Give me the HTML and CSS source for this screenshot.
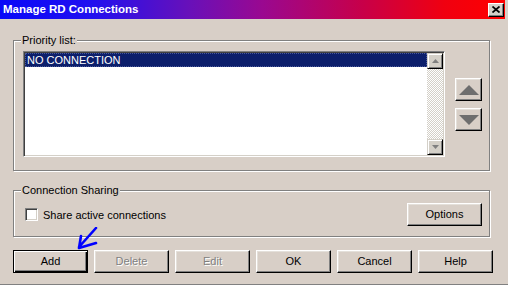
FILE: index.html
```html
<!DOCTYPE html>
<html>
<head>
<meta charset="utf-8">
<link rel="stylesheet" href="styles.css">
</head>
<body>
<div class="window">
  <div class="titlebar">
    <span class="title">Manage RD Connections</span>
    <button class="close" aria-label="Close">
      <svg width="8" height="7" viewBox="0 0 8 7"><path d="M0.5 0.5 L7.5 6.5 M7.5 0.5 L0.5 6.5" stroke="#000" stroke-width="1.7" fill="none"/></svg>
    </button>
  </div>

  <div class="group group-priority">
    <span class="legend">Priority list:</span>
    <div class="listbox">
      <div class="list-items">
        <div class="item selected">NO CONNECTION</div>
      </div>
      <div class="scrollbar">
        <div class="sb-btn">
          <svg width="7" height="4" viewBox="0 0 7 4"><path d="M3.5 0 L7 4 L0 4 Z" fill="#808080"/></svg>
        </div>
        <div class="sb-track"></div>
        <div class="sb-btn">
          <svg width="7" height="4" viewBox="0 0 7 4"><path d="M0 0 L7 0 L3.5 4 Z" fill="#808080"/></svg>
        </div>
      </div>
    </div>
    <div class="order-btns">
      <button class="btn arrow-btn" aria-label="Move up">
        <svg width="20" height="10" viewBox="0 0 20 10"><path d="M10 0 L20 10 L0 10 Z" fill="#6e6e6e"/></svg>
      </button>
      <button class="btn arrow-btn" aria-label="Move down">
        <svg width="20" height="10" viewBox="0 0 20 10"><path d="M0 0 L20 0 L10 10 Z" fill="#6e6e6e"/></svg>
      </button>
    </div>
  </div>

  <div class="group group-sharing">
    <span class="legend">Connection Sharing</span>
    <label class="check"><span class="checkbox"></span>Share active connections</label>
    <button class="btn">Options</button>
  </div>

  <div class="actions">
    <button class="btn default">Add</button>
    <button class="btn disabled">Delete</button>
    <button class="btn disabled">Edit</button>
    <button class="btn">OK</button>
    <button class="btn">Cancel</button>
    <button class="btn">Help</button>
  </div>

  <svg class="annotation" width="30" height="30" viewBox="0 0 30 30">
    <path d="M26 1 L9 20 M9 21 L11 9 M9 21 L26 16" stroke="#0000ff" stroke-width="2.6" fill="none" stroke-linecap="round"/>
  </svg>
</div>
</body>
</html>
```

FILE: styles.css
```css
* { box-sizing: border-box; }

html, body {
  margin: 0;
  padding: 0;
  background: #d8cfc7;
}

.window {
  position: relative;
  width: 508px;
  height: 285px;
  background: #d8cfc7;
  font-family: "Liberation Sans", Arial, sans-serif;
  font-size: 11px;
  color: #000;
  overflow: hidden;
  border-bottom: 1px solid #808080;
}

.titlebar {
  width: 505px;
  height: 19px;
  display: flex;
  align-items: center;
  justify-content: space-between;
  padding-left: 3px;
  background: linear-gradient(to right, #0808f8 0%, #2010f0 18%, #6a10b8 38%, #9a0890 52%, #c80048 72%, #f00010 88%, #ff0000 100%);
}

.title {
  color: #fff;
  font-weight: bold;
  font-size: 11.5px;
  line-height: 19px;
}

.close {
  width: 16px;
  height: 14px;
  margin: 0 1px 0 0;
  padding: 0;
  display: flex;
  align-items: center;
  justify-content: center;
  background: #d4d0c8;
  border: 1px solid;
  border-color: #fff #000 #000 #fff;
  box-shadow: inset -1px -1px 0 #808080;
}

.group {
  position: relative;
  width: 477px;
  margin-left: 13px;
  border: 1px solid #808080;
  box-shadow: 1px 1px 0 #fff, inset 1px 1px 0 #fff;
  display: flex;
}

.legend {
  position: absolute;
  top: -7px;
  left: 7px;
  padding: 0 1px;
  line-height: 13px;
  background: #d8cfc7;
}

.group-priority {
  margin-top: 21px;
  height: 131px;
  padding: 10px 0 0 9px;
  align-items: flex-start;
}

.listbox {
  width: 422px;
  height: 106px;
  display: flex;
  padding: 1px;
  border: 1px solid;
  border-color: #808080 #fff #fff #808080;
  box-shadow: inset 1px 1px 0 #404040, inset -1px -1px 0 #d4d0c8;
  background: #fff;
}

.list-items {
  flex: 1;
  background: #fff;
}

.item {
  height: 14px;
  line-height: 14px;
  padding-left: 2px;
}

.item.selected {
  background: #0c1f6b;
  color: #fff;
  outline: 1px dotted #4a5a9a;
  outline-offset: -1px;
}

.scrollbar {
  width: 16px;
  display: flex;
  flex-direction: column;
}

.sb-btn {
  height: 16px;
  display: flex;
  align-items: center;
  justify-content: center;
  background: #d4d0c8;
  border: 1px solid;
  border-color: #d4d0c8 #000 #000 #d4d0c8;
  box-shadow: inset 1px 1px 0 #fff, inset -1px -1px 0 #808080;
}

.sb-track {
  flex: 1;
  background-color: #fff;
  background-image: repeating-conic-gradient(#d4d0c8 0 25%, #fff 0 50%);
  background-size: 2px 2px;
}

.order-btns {
  margin-left: 10px;
  padding-top: 27px;
  display: flex;
  flex-direction: column;
  gap: 7px;
}

.btn {
  width: 75px;
  height: 23px;
  padding: 0 0 1px 0;
  font-family: "Liberation Sans", Arial, sans-serif;
  font-size: 11px;
  color: #000;
  background: #d8cfc7;
  border: 1px solid;
  border-color: #fff #000 #000 #fff;
  box-shadow: inset -1px -1px 0 #808080, inset 1px 1px 0 #e4e0da;
  display: flex;
  align-items: center;
  justify-content: center;
}

.arrow-btn {
  width: 27px;
  height: 23px;
  padding: 0;
}

.btn.default {
  border-color: #000;
  box-shadow: inset 1px 1px 0 #fff, inset -1px -1px 0 #000, inset -2px -2px 0 #808080;
}

.btn.disabled {
  color: #808080;
  text-shadow: 1px 1px 0 #fff;
}

.group-sharing {
  margin-top: 19px;
  height: 47px;
  padding: 12px 7px 0 11px;
  align-items: flex-start;
  justify-content: space-between;
}

.check {
  height: 23px;
  display: flex;
  align-items: center;
}

.checkbox {
  width: 13px;
  height: 13px;
  margin-right: 5px;
  background: #fff;
  border: 1px solid;
  border-color: #808080 #fff #fff #808080;
  box-shadow: inset 1px 1px 0 #404040, inset -1px -1px 0 #d4d0c8;
}

.actions {
  margin: 13px 0 0 13px;
  display: flex;
  gap: 6px;
}

.annotation {
  position: absolute;
  left: 70px;
  top: 227px;
}
```
